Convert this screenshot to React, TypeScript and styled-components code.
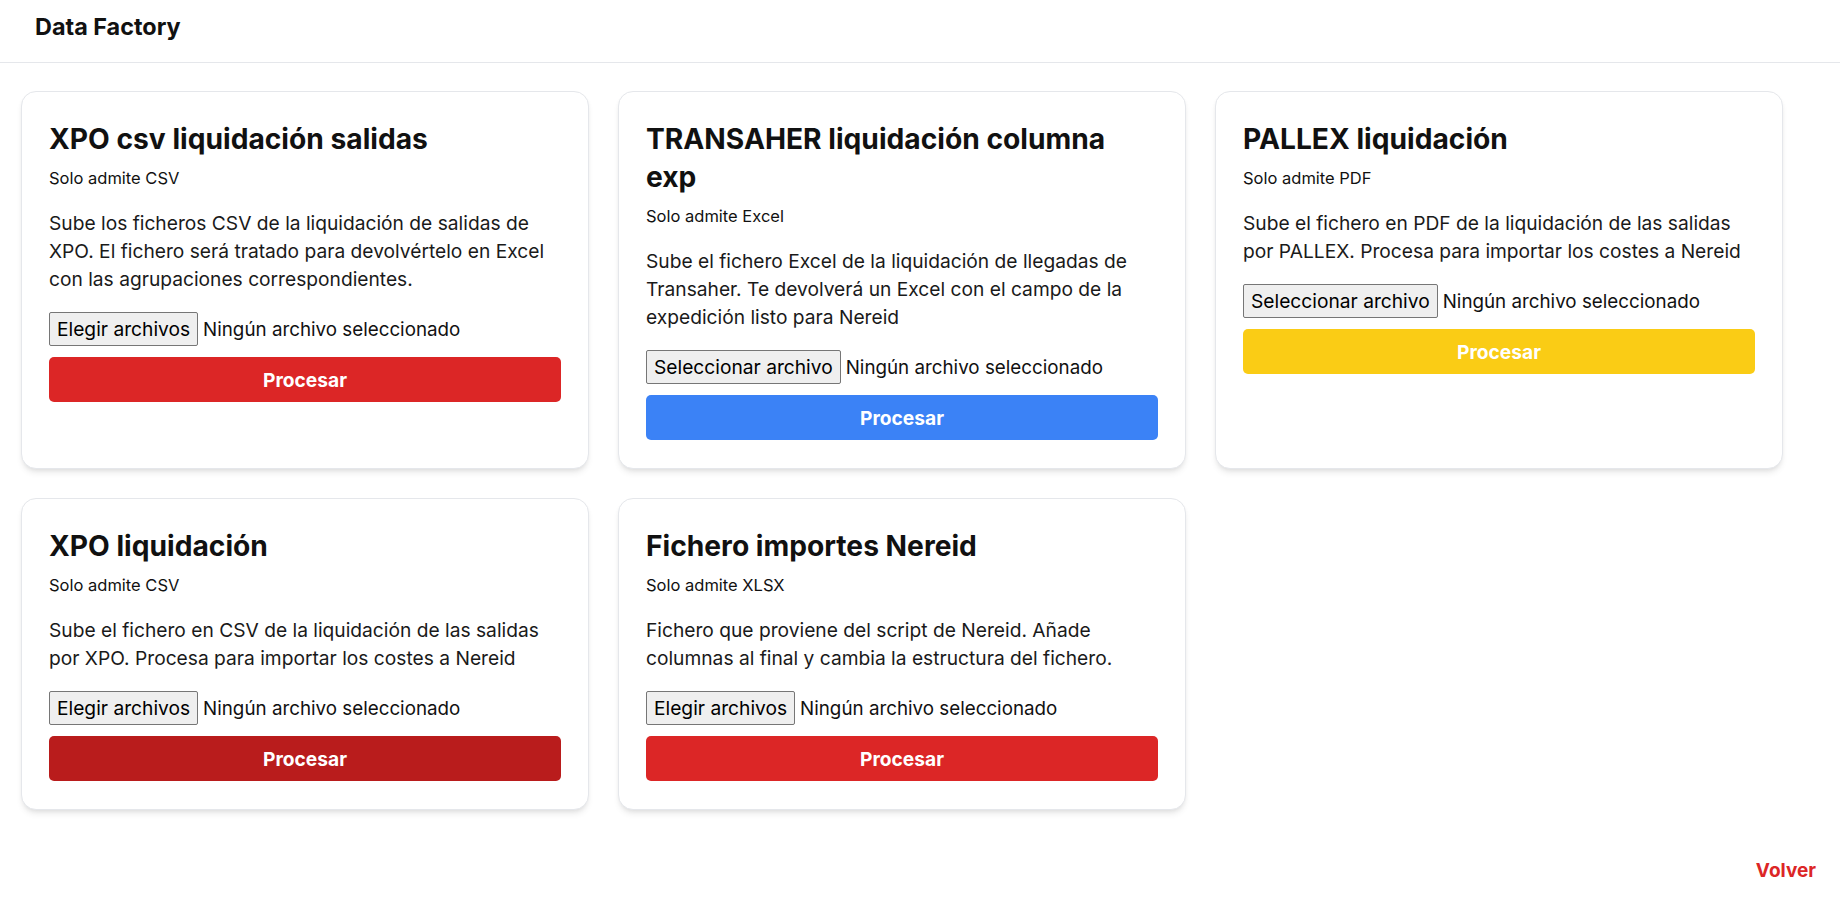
import styled, { createGlobalStyle } from "styled-components"

const GlobalStyle = createGlobalStyle`
	* {
		box-sizing: border-box;
	}
	body {
		margin: 0;
		background: #ffffff;
		font-family: Inter, "Noto Sans", sans-serif;
		color: #111111;
	}
`

type Tone = "red" | "blue" | "yellow" | "darkRed"

const toneColors: Record<Tone, string> = {
	red: "#dc2626",
	blue: "#3b82f6",
	yellow: "#facc15",
	darkRed: "#b91c1c",
}

type Processor = {
	title: string
	accepts: string
	description: string
	pickLabel: string
	tone: Tone
}

const processors: Processor[] = [
	{
		title: "XPO csv liquidación salidas",
		accepts: "Solo admite CSV",
		description:
			"Sube los ficheros CSV de la liquidación de salidas de XPO. El fichero será tratado para devolvértelo en Excel con las agrupaciones correspondientes.",
		pickLabel: "Elegir archivos",
		tone: "red",
	},
	{
		title: "TRANSAHER liquidación columna exp",
		accepts: "Solo admite Excel",
		description:
			"Sube el fichero Excel de la liquidación de llegadas de Transaher. Te devolverá un Excel con el campo de la expedición listo para Nereid",
		pickLabel: "Seleccionar archivo",
		tone: "blue",
	},
	{
		title: "PALLEX liquidación",
		accepts: "Solo admite PDF",
		description:
			"Sube el fichero en PDF de la liquidación de las salidas por PALLEX. Procesa para importar los costes a Nereid",
		pickLabel: "Seleccionar archivo",
		tone: "yellow",
	},
	{
		title: "XPO liquidación",
		accepts: "Solo admite CSV",
		description:
			"Sube el fichero en CSV de la liquidación de las salidas por XPO. Procesa para importar los costes a Nereid",
		pickLabel: "Elegir archivos",
		tone: "darkRed",
	},
	{
		title: "Fichero importes Nereid",
		accepts: "Solo admite XLSX",
		description:
			"Fichero que proviene del script de Nereid. Añade columnas al final y cambia la estructura del fichero.",
		pickLabel: "Elegir archivos",
		tone: "red",
	},
]

const App = () => {
	return (
		<>
			<GlobalStyle />
			<Page>
				<Header>
					<Brand>Data Factory</Brand>
				</Header>
				<Main>
					<CardGrid>
						{processors.map((item) => (
							<Card key={item.title}>
								<Title>{item.title}</Title>
								<Accepts>{item.accepts}</Accepts>
								<Description>{item.description}</Description>
								<FilePicker>
									<HiddenInput type="file" multiple={item.pickLabel === "Elegir archivos"} />
									<PickButton>{item.pickLabel}</PickButton>
									<PickStatus>Ningún archivo seleccionado</PickStatus>
								</FilePicker>
								<ProcessButton tone={item.tone}>Procesar</ProcessButton>
							</Card>
						))}
					</CardGrid>
				</Main>
				<Footer>
					<BackLink href="#">Volver</BackLink>
				</Footer>
			</Page>
		</>
	)
}

const Page = styled.div`
	min-height: 100vh;
	display: flex;
	flex-direction: column;
`

const Header = styled.header`
	height: 63px;
	padding: 12px 35px 0;
	border-bottom: 1px solid #e5e7eb;
`

const Brand = styled.h1`
	margin: 0;
	font-size: 23.4px;
	line-height: 30px;
	font-weight: 700;
	color: #111111;
`

const Main = styled.main`
	padding: 28px 21px 28px;
`

const CardGrid = styled.div`
	display: grid;
	grid-template-columns: repeat(3, 568px);
	column-gap: 29px;
	row-gap: 29px;
`

const Card = styled.section`
	display: flex;
	flex-direction: column;
	background: #ffffff;
	border: 1px solid #e5e7eb;
	border-radius: 15px;
	padding: 28px 27px;
	box-shadow: 0 5px 7px -2px rgba(0, 0, 0, 0.1), 0 2px 5px -2px rgba(0, 0, 0, 0.08);
`

const Title = styled.h2`
	margin: 0;
	font-size: 28.2px;
	line-height: 38px;
	font-weight: 700;
	color: #111111;
`

const Accepts = styled.p`
	margin: 8px 0 0;
	font-size: 16.5px;
	line-height: 24px;
	color: #111111;
`

const Description = styled.p`
	margin: 19px 0 0;
	font-size: 19.2px;
	line-height: 28px;
	color: #1a1a1a;
`

const FilePicker = styled.label`
	margin-top: 19px;
	height: 34px;
	display: flex;
	align-items: center;
	font-size: 19.2px;
	color: #111111;
	cursor: pointer;
`

const HiddenInput = styled.input`
	display: none;
`

const PickButton = styled.span`
	height: 34px;
	display: inline-flex;
	align-items: center;
	padding: 0 7px;
	background: #efefef;
	border: 1px solid #767676;
	border-radius: 2px;
	color: #000000;
	white-space: nowrap;
`

const PickStatus = styled.span`
	margin-left: 5px;
	font-size: 18.8px;
	white-space: nowrap;
`

const ProcessButton = styled.button<{ tone: Tone }>`
	margin-top: 11px;
	height: 45px;
	width: 100%;
	border: none;
	border-radius: 5px;
	background: ${(props) => toneColors[props.tone]};
	color: #ffffff;
	font-family: Inter, "Noto Sans", sans-serif;
	font-size: 19.2px;
	font-weight: 700;
	cursor: pointer;
`

const Footer = styled.footer`
	display: flex;
	justify-content: flex-end;
	padding: 21px 24px 0;
`

const BackLink = styled.a`
	font-size: 19px;
	line-height: 24px;
	font-weight: 700;
	color: #dc2626;
	text-decoration: none;
`

export default App
